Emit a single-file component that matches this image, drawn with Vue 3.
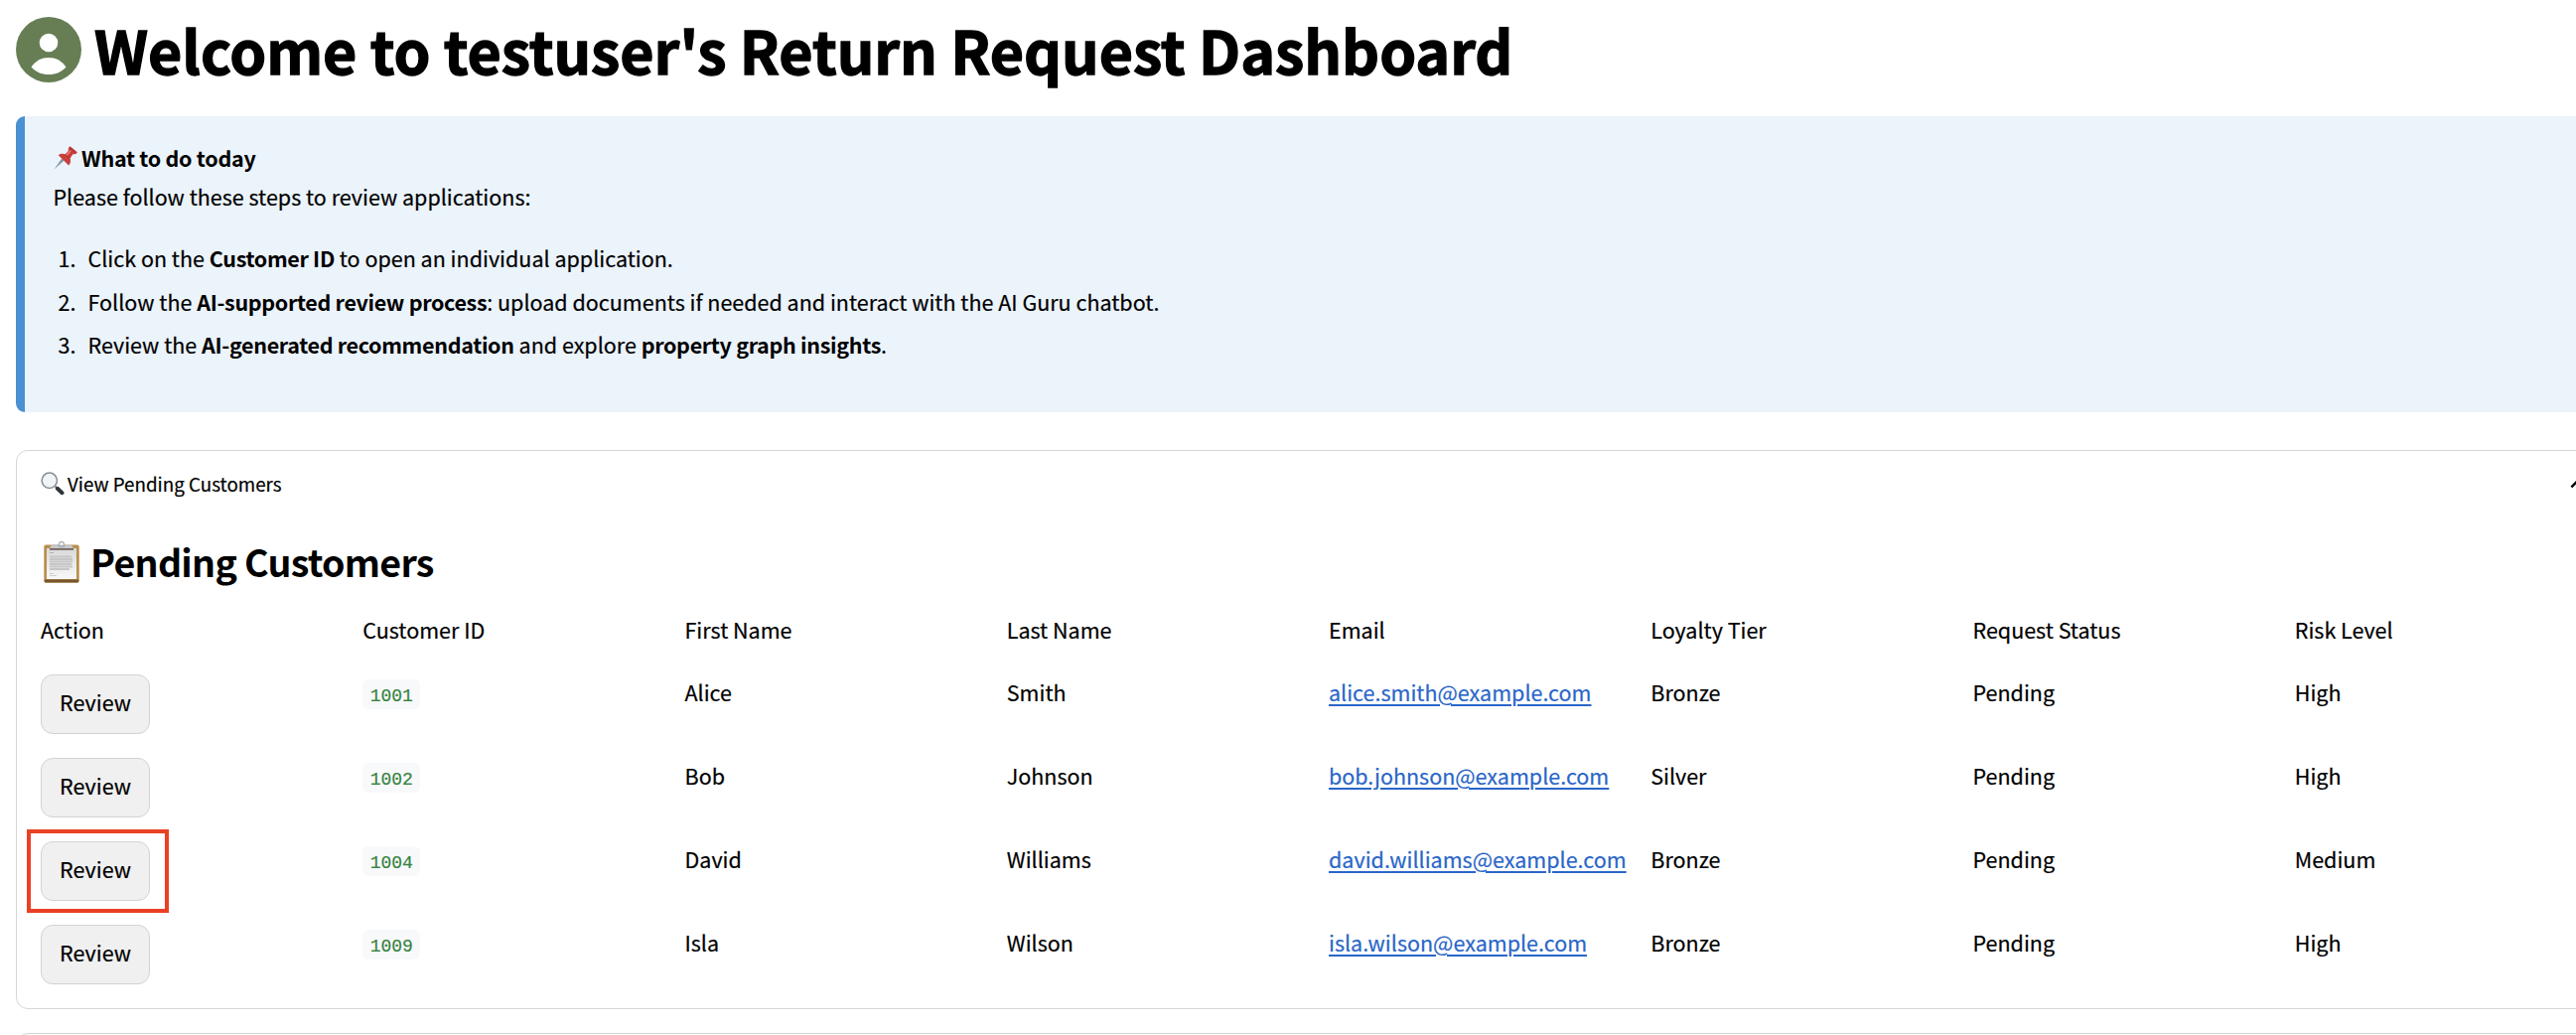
<script setup>
const columns = ['Action', 'Customer ID', 'First Name', 'Last Name', 'Email', 'Loyalty Tier', 'Request Status', 'Risk Level']
const customers = [
  { id: '1001', first: 'Alice', last: 'Smith', email: 'alice.smith@example.com', tier: 'Bronze', status: 'Pending', risk: 'High' },
  { id: '1002', first: 'Bob', last: 'Johnson', email: 'bob.johnson@example.com', tier: 'Silver', status: 'Pending', risk: 'High' },
  { id: '1004', first: 'David', last: 'Williams', email: 'david.williams@example.com', tier: 'Bronze', status: 'Pending', risk: 'Medium', marked: true },
  { id: '1009', first: 'Isla', last: 'Wilson', email: 'isla.wilson@example.com', tier: 'Bronze', status: 'Pending', risk: 'High' },
]
</script>

<template>
  <div class="page">
    <header class="title">
      <svg class="avatar" viewBox="0 0 66 66">
        <circle cx="33" cy="33" r="33" fill="#677e55" />
        <circle cx="33" cy="26" r="9.3" fill="#fff" />
        <path d="M15.500 50.500C20 44 26 41 33 41s13 3 17.500 9.500C46 55.500 40 58 33 58s-13-2.500-17.500-7.500z" fill="#fff" />
      </svg>
      <h1>Welcome to testuser's Return Request Dashboard</h1>
    </header>

    <section class="notice">
      <p class="lead">
        <svg class="pin" viewBox="0 0 24 24">
          <path d="M0.500 23.500L8.200 12.500l2.400 1.900z" fill="#8795a1" />
          <path d="M4.800 9.300c2-1.800 4.800-1.900 6.900-1l3.200-3.600c-.5-1.900.3-3.700 1.700-4.500l7.200 6.100c-.8 1.700-2.600 2.400-4.400 1.900l-2.800 4.300c.9 2.300.500 5.200-1.500 7z" fill="#c93f3c" />
          <path d="M16.300 1.500l6 5M11.500 8.800l4.600 3.800" stroke="#a33032" stroke-width="1" fill="none" />
          <path d="M13 9.300l4-4.500" stroke="#ee8580" stroke-width="1.300" />
        </svg><strong>What to do today</strong>
      </p>
      <p>Please follow these steps to review applications:</p>
      <ol>
        <li><span class="num">1.</span><span>Click on the <strong>Customer ID</strong> to open an individual application.</span></li>
        <li><span class="num">2.</span><span>Follow the <strong>AI-supported review process</strong>: upload documents if needed and interact with the AI Guru chatbot.</span></li>
        <li><span class="num">3.</span><span>Review the <strong>AI-generated recommendation</strong> and explore <strong>property graph insights</strong>.</span></li>
      </ol>
    </section>

    <section class="card">
      <div class="summary">
        <svg class="lens" viewBox="0 0 24 24">
          <path d="M14.500 14.500l2.500 2.500" stroke="#8b9298" stroke-width="2" />
          <path d="M16.800 16.800l4.700 4.400" stroke="#30353b" stroke-width="4" stroke-linecap="round" />
          <circle cx="8.800" cy="8.800" r="7.700" fill="#f1f3f5" stroke="#878e96" stroke-width="1.500" />
        </svg>
        <span>View Pending Customers</span>
        <svg class="chevron" viewBox="0 0 24 24"><path d="M12 8l-6 6 1.410 1.410L12 10.830l4.590 4.580L18 14z" /></svg>
      </div>

      <h3>
        <svg class="clipboard" viewBox="0 0 36 42">
          <defs>
            <linearGradient id="paper" x1="0" y1="0" x2="0" y2="1">
              <stop offset="0" stop-color="#d9d9d9" /><stop offset="1" stop-color="#f8f8f8" />
            </linearGradient>
          </defs>
          <rect x="0.300" y="3.500" width="35.400" height="38" rx="2" fill="#b98f4d" />
          <rect x="0.800" y="38.500" width="34.400" height="3" rx="1" fill="#79552b" />
          <rect x="3" y="7" width="30" height="31" fill="url(#paper)" />
          <path d="M6 11.500h4" stroke="#b5b5b5" />
          <path d="M6 15.500h22M6 18h23M6 20.500h23M6 23h22M6 25.500h23M6 28h20" stroke="#c6c6c6" stroke-width="2.200" />
          <path d="M6 32.500h4M6 34.500h7" stroke="#cfcfcf" />
          <path d="M6 7l2-3.500h20L30 7z" fill="#c6c7ca" />
          <path d="M6 7h24v1.800H6z" fill="#77645c" />
          <circle cx="18" cy="3" r="2.500" fill="#fff" stroke="#a9b1ba" stroke-width="1.300" />
          <path d="M14 4.500h8" stroke="#a9b1ba" stroke-width="1.500" />
        </svg>
        <span>Pending Customers</span>
      </h3>

      <div class="row head">
        <span v-for="c in columns" :key="c">{{ c }}</span>
      </div>
      <div v-for="c in customers" :key="c.id" class="row">
        <div class="action"><button>Review</button><i v-if="c.marked" class="marker"></i></div>
        <div><code>{{ c.id }}</code></div>
        <span>{{ c.first }}</span>
        <span>{{ c.last }}</span>
        <a>{{ c.email }}</a>
        <span>{{ c.tier }}</span>
        <span>{{ c.status }}</span>
        <span>{{ c.risk }}</span>
      </div>
    </section>

    <section class="card next"></section>
  </div>
</template>

<style>
body { background: #fff; overflow: hidden; }
</style>

<style scoped>
.page { box-sizing: border-box; width: 2652px; height: 1042px; padding: 0 16px; overflow: hidden; font-family: "Noto Sans CJK SC", sans-serif; font-size: 21.500px; line-height: 36px; color: #000; -webkit-text-stroke: 0.200px; }
* { box-sizing: border-box; }
h1, h3, p, ol { margin: 0; padding: 0; }
strong { font-weight: 700; letter-spacing: -0.320px; -webkit-text-stroke: 0; }
.title { display: flex; height: 117px; padding-top: 17px; gap: 13px; }
.avatar { width: 66px; height: 66px; }
h1 { margin-top: -5px; font-size: 59.100px; line-height: 74px; font-weight: 700; letter-spacing: -0.040px; white-space: nowrap; -webkit-text-stroke: 1.300px; }
.notice { height: 298px; border-left: 9px solid #4a90d2; border-radius: 9px; background: #ebf3fb; padding: 22px 28.500px; }
.notice p { height: 39px; line-height: 39px; }
.notice .lead { display: flex; }
.lead strong { letter-spacing: -0.270px; }
.pin { width: 24px; height: 24px; margin: 8px 4px 0 0.500px; }
ol { list-style: none; margin-top: 21px; }
li { display: flex; height: 43.500px; line-height: 43.500px; }
.num { width: 35px; padding-left: 5px; }
.card { margin-top: 38px; height: 563px; border: 1px solid #d5d6d8; border-radius: 12px; padding: 0 24px; }
.card.next { margin-top: 24px; height: 80px; }
.summary { display: flex; height: 68px; padding-top: 15px; font-size: 18.800px; }
.lens { width: 24px; height: 24px; margin: 6px 3px 0 0; }
.chevron { width: 30px; height: 30px; margin: 3px 0 0 auto; }
h3 { display: flex; height: 86px; font-size: 37.600px; line-height: 50px; font-weight: 700; letter-spacing: -0.720px; padding-top: 18px; -webkit-text-stroke: 0; }
.clipboard { width: 36px; height: 42px; margin: 5px 11px 0 3px; }
.row { display: grid; grid-template-columns: repeat(8, 1fr); column-gap: 24px; height: 84px; white-space: nowrap; }
.row.head { height: 71px; padding-top: 8px; }
.action { position: relative; }
button { display: block; width: 110px; height: 60px; padding: 0 0 4px; border: 1px solid #d3d3d4; border-radius: 12px; background: #f0f0f0; font: inherit; color: inherit; }
.marker { position: absolute; left: -14px; top: -12px; width: 143px; height: 84px; border: 4px solid #ea4025; }
code { display: block; width: 58px; height: 30px; margin-top: 5px; border-radius: 6px; background: #f8f9fb; color: #36833f; font: 18px/34px "Liberation Mono", monospace; text-align: center; }
a { color: #2a66c8; text-decoration: underline; text-decoration-thickness: 2px; text-underline-offset: 3px; }
</style>
